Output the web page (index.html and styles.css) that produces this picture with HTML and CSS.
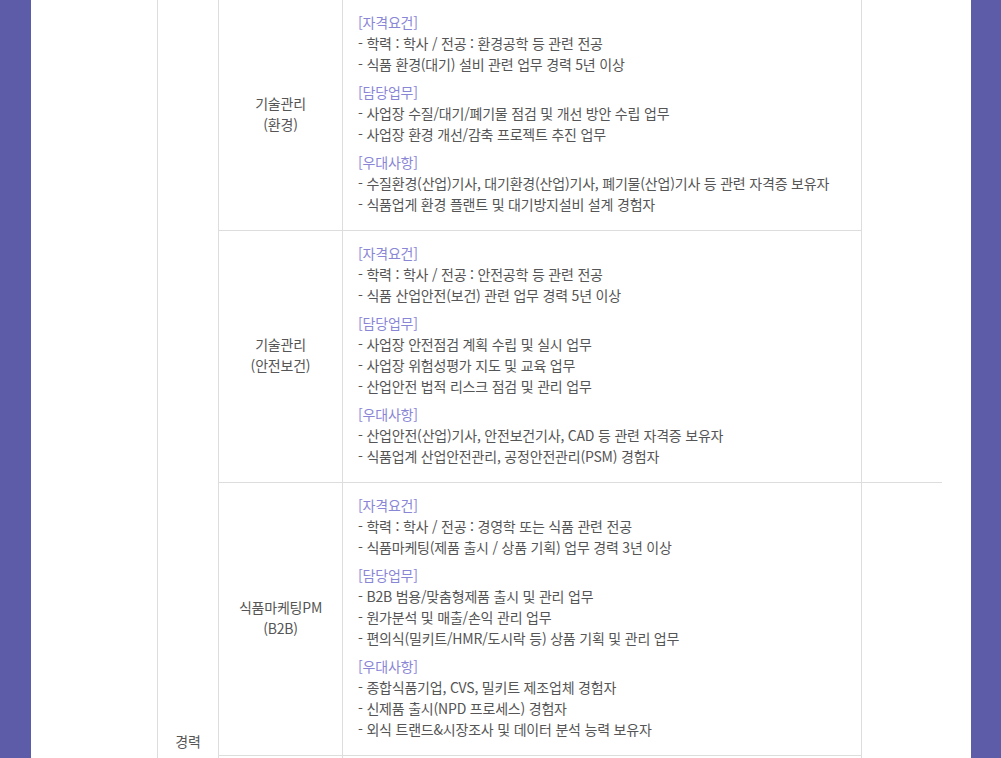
FILE: index.html
```html
<!DOCTYPE html>
<html lang="ko">
  <head>
    <meta charset="utf-8">
    <title>채용공고 - 모집분야</title>
    <link rel="stylesheet" href="styles.css">
  </head>
  <body>
    <div class="page">
      <table class="recruit">
        <colgroup>
          <col class="c-type">
          <col class="c-job">
          <col class="c-desc">
          <col class="c-etc">
        </colgroup>
        <tr>
          <td class="type" rowspan="6">경력</td>
          <td class="job">기술관리<br>(환경)</td>
          <td class="desc">
            <div class="sec">
              <p class="tit">[자격요건]</p>
              <p>- 학력 : 학사 / 전공 : 환경공학 등 관련 전공</p>
              <p>- 식품 환경(대기) 설비 관련 업무 경력 5년 이상</p>
            </div>
            <div class="sec">
              <p class="tit">[담당업무]</p>
              <p>- 사업장 수질/대기/폐기물 점검 및 개선 방안 수립 업무</p>
              <p>- 사업장 환경 개선/감축 프로젝트 추진 업무</p>
            </div>
            <div class="sec">
              <p class="tit">[우대사항]</p>
              <p>- 수질환경(산업)기사, 대기환경(산업)기사, 폐기물(산업)기사 등 관련 자격증 보유자</p>
              <p>- 식품업게 환경 플랜트 및 대기방지설비 설계 경험자</p>
            </div>
          </td>
          <td class="etc" rowspan="2"></td>
        </tr>
        <tr>
          <td class="job">기술관리<br>(안전보건)</td>
          <td class="desc">
            <div class="sec">
              <p class="tit">[자격요건]</p>
              <p>- 학력 : 학사 / 전공 : 안전공학 등 관련 전공</p>
              <p>- 식품 산업안전(보건) 관련 업무 경력 5년 이상</p>
            </div>
            <div class="sec">
              <p class="tit">[담당업무]</p>
              <p>- 사업장 안전점검 계획 수립 및 실시 업무</p>
              <p>- 사업장 위험성평가 지도 및 교육 업무</p>
              <p>- 산업안전 법적 리스크 점검 및 관리 업무</p>
            </div>
            <div class="sec">
              <p class="tit">[우대사항]</p>
              <p>- 산업안전(산업)기사, 안전보건기사, CAD 등 관련 자격증 보유자</p>
              <p>- 식품업계 산업안전관리, 공정안전관리(PSM) 경험자</p>
            </div>
          </td>
        </tr>
        <tr>
          <td class="job">식품마케팅PM<br>(B2B)</td>
          <td class="desc">
            <div class="sec">
              <p class="tit">[자격요건]</p>
              <p>- 학력 : 학사 / 전공 : 경영학 또는 식품 관련 전공</p>
              <p>- 식품마케팅(제품 출시 / 상품 기획) 업무 경력 3년 이상</p>
            </div>
            <div class="sec">
              <p class="tit">[담당업무]</p>
              <p>- B2B 범용/맞춤형제품 출시 및 관리 업무</p>
              <p>- 원가분석 및 매출/손익 관리 업무</p>
              <p>- 편의식(밀키트/HMR/도시락 등) 상품 기획 및 관리 업무</p>
            </div>
            <div class="sec">
              <p class="tit">[우대사항]</p>
              <p>- 종합식품기업, CVS, 밀키트 제조업체 경험자</p>
              <p>- 신제품 출시(NPD 프로세스) 경험자</p>
              <p>- 외식 트랜드&amp;시장조사 및 데이터 분석 능력 보유자</p>
            </div>
          </td>
          <td class="etc" rowspan="4"></td>
        </tr>
        <tr>
          <td class="job">식품마케팅PM<br>(B2C)</td>
          <td class="desc">
            <div class="sec">
              <p class="tit">[자격요건]</p>
              <p>- 학력 : 학사 / 전공 : 경영학 또는 식품 관련 전공</p>
              <p>- 식품마케팅 업무 경력 3년 이상</p>
            </div>
            <div class="sec">
              <p class="tit">[담당업무]</p>
              <p>- B2C 브랜드 제품 출시 및 관리 업무</p>
              <p>- 채널별 판매 전략 수립 업무</p>
              <p>- 프로모션 기획 및 실행 업무</p>
            </div>
            <div class="sec">
              <p class="tit">[우대사항]</p>
              <p>- 종합식품기업 브랜드 매니저 경험자</p>
              <p>- 온라인 채널 마케팅 경험자</p>
            </div>
          </td>
        </tr>
        <tr>
          <td class="job">품질관리</td>
          <td class="desc">
            <div class="sec">
              <p class="tit">[자격요건]</p>
              <p>- 학력 : 학사 / 전공 : 식품공학 등 관련 전공</p>
              <p>- 식품 품질관리 업무 경력 3년 이상</p>
            </div>
            <div class="sec">
              <p class="tit">[담당업무]</p>
              <p>- HACCP 운영 및 관리 업무</p>
              <p>- 공정 및 제품 품질 점검 업무</p>
            </div>
            <div class="sec">
              <p class="tit">[우대사항]</p>
              <p>- 식품기사 자격증 보유자</p>
              <p>- 식품제조업체 품질관리 경험자</p>
            </div>
          </td>
        </tr>
        <tr>
          <td class="job">구매관리</td>
          <td class="desc">
            <div class="sec">
              <p class="tit">[자격요건]</p>
              <p>- 학력 : 학사 / 전공 : 무관</p>
              <p>- 식품 원부자재 구매 업무 경력 3년 이상</p>
            </div>
            <div class="sec">
              <p class="tit">[담당업무]</p>
              <p>- 원부자재 구매 계획 수립 업무</p>
              <p>- 협력업체 발굴 및 관리 업무</p>
              <p>- 단가 협상 및 계약 관리 업무</p>
            </div>
            <div class="sec">
              <p class="tit">[우대사항]</p>
              <p>- 식품제조업체 구매 경험자</p>
              <p>- 무역 관련 업무 경험자</p>
            </div>
          </td>
        </tr>
      </table>
    </div>
  </body>
</html>
```

FILE: styles.css
```css
body{
  margin: 0;
  background-color: #5c5ca8;
  font-family: "Noto Sans CJK KR", "Noto Sans", sans-serif;
  font-size: 14px;
  letter-spacing: -0.2px;
  line-height: 21px;
  color: #555;
}
.page{
  margin: 0 30px 0 31px;
  padding: 0 30px 0 126px;
  background-color: #fff;
}
.recruit{
  width: 784px;
  table-layout: fixed;
  border-collapse: collapse;
}
.c-type{ width: 61px; }
.c-job{ width: 124px; }
.c-desc{ width: 519px; }
.c-etc{ width: 80px; }

.recruit td{
  border: 1px solid #dddddd;
  padding: 12px 15px 15px;
  vertical-align: middle;
}
.recruit tr:first-child td{
  border-top: 0;
}
.recruit .type{
  text-align: center;
  padding: 12px 0 20px;
}
.recruit .job{
  text-align: center;
  padding: 12px 5px 15px;
}
.recruit .desc{
  text-align: left;
}
.recruit .etc{
  border-right: 0;
}
.sec{
  margin-top: 7px;
}
.sec:first-child{
  margin-top: 0;
}
.sec p{
  margin: 0;
}
.sec .tit{
  color: #8a86d6;
}
```
